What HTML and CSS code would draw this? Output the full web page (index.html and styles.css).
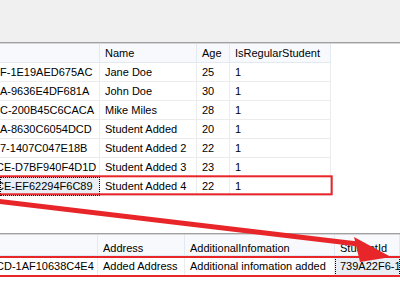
FILE: index.html
```html
<!DOCTYPE html>
<html lang="en">
<head>
    <meta charset="UTF-8">
    <title>Students query results</title>
    <link rel="stylesheet" href="styles.css">
</head>
<body>
    <div class="window">
        <div class="toolbar"></div>

        <div class="grid grid-top">
            <div class="row head">
                <div class="cell"></div>
                <div class="cell">Name</div>
                <div class="cell">Age</div>
                <div class="cell">IsRegularStudent</div>
            </div>
            <div class="row">
                <div class="cell id">F-1E19AED675AC</div>
                <div class="cell">Jane Doe</div>
                <div class="cell">25</div>
                <div class="cell">1</div>
            </div>
            <div class="row">
                <div class="cell id">A-9636E4DF681A</div>
                <div class="cell">John Doe</div>
                <div class="cell">30</div>
                <div class="cell">1</div>
            </div>
            <div class="row">
                <div class="cell id">C-200B45C6CACA</div>
                <div class="cell">Mike Miles</div>
                <div class="cell">28</div>
                <div class="cell">1</div>
            </div>
            <div class="row">
                <div class="cell id">A-8630C6054DCD</div>
                <div class="cell">Student Added</div>
                <div class="cell">20</div>
                <div class="cell">1</div>
            </div>
            <div class="row">
                <div class="cell id">7-1407C047E18B</div>
                <div class="cell">Student Added 2</div>
                <div class="cell">22</div>
                <div class="cell">1</div>
            </div>
            <div class="row">
                <div class="cell id shifted">CE-D7BF940F4D1D</div>
                <div class="cell">Student Added 3</div>
                <div class="cell">23</div>
                <div class="cell">1</div>
            </div>
            <div class="row">
                <div class="cell id shifted selected">CE-EF62294F6C89</div>
                <div class="cell">Student Added 4</div>
                <div class="cell">22</div>
                <div class="cell">1</div>
            </div>
        </div>

        <div class="grid grid-bottom">
            <div class="row head">
                <div class="cell"></div>
                <div class="cell">Address</div>
                <div class="cell">AdditionalInfomation</div>
                <div class="cell">StudentId</div>
            </div>
            <div class="row">
                <div class="cell id shifted">CD-1AF10638C4E4</div>
                <div class="cell">Added Address</div>
                <div class="cell">Additional infomation added</div>
                <div class="cell selected">739A22F6-1D4B-4E2A</div>
            </div>
        </div>

        <!-- annotation layer drawn over the grids -->
        <svg class="marks" width="400" height="302" viewBox="0 0 400 302">
            <rect x="-3" y="176.3" width="334.7" height="18" fill="none" stroke="#e8262a" stroke-width="2"/>
            <rect x="-3" y="257" width="410" height="19" fill="none" stroke="#e8262a" stroke-width="2"/>
            <line x1="-4" y1="201" x2="362" y2="244.5" stroke="#e8262a" stroke-width="5"/>
            <polygon points="354,237 391,257 360,262" fill="#e8262a"/>
        </svg>
    </div>
</body>
</html>
```

FILE: styles.css
```css
* {
    box-sizing: border-box;
}

body {
    margin: 0;
    background-color: #ffffff;
    color: #000000;
    font-family: "Liberation Sans", Arial, sans-serif;
    font-size: 11px;
    overflow: hidden;
}

.window {
    position: relative;
    width: 400px;
    height: 302px;
    overflow: hidden;
}

.toolbar {
    height: 43px;
    background-color: #f0f0f0;
    border-bottom: 1px solid #a0a0a0;
}

.row {
    display: grid;
    height: 19px;
}

.grid-top .row {
    grid-template-columns: 100px 97px 33px 101px;
}

.grid-bottom .row {
    grid-template-columns: 98px 87px 150px 1fr;
    height: 20px;
}

.cell {
    padding-left: 5px;
    line-height: 19px;
    white-space: nowrap;
    overflow: hidden;
    border-right: 1px solid #ececec;
    border-bottom: 1px solid #ececec;
}

.head {
    border-top: 1px solid #d6d6d6;
}

.grid-top .head {
    height: 20px;
}

.head .cell {
    background-color: #f7f9fc;
    border-color: #e2e9f1;
    line-height: 18px;
}

.grid-bottom {
    margin-top: 37px;
    border-top: 1px solid #a0a0a0;
}

.grid-bottom .head {
    height: 22px;
}

.grid-bottom .head .cell {
    padding-top: 6px;
    line-height: 15px;
}

.grid-bottom .row:last-child .cell {
    line-height: 20px;
}

.id {
    padding-left: 0;
}

.shifted {
    text-indent: -4px;
}

.selected {
    background-color: #e9eef4;
    outline: 1px dotted #000000;
    outline-offset: -1px;
}

.marks {
    position: absolute;
    top: 0;
    left: 0;
    pointer-events: none;
}
```
